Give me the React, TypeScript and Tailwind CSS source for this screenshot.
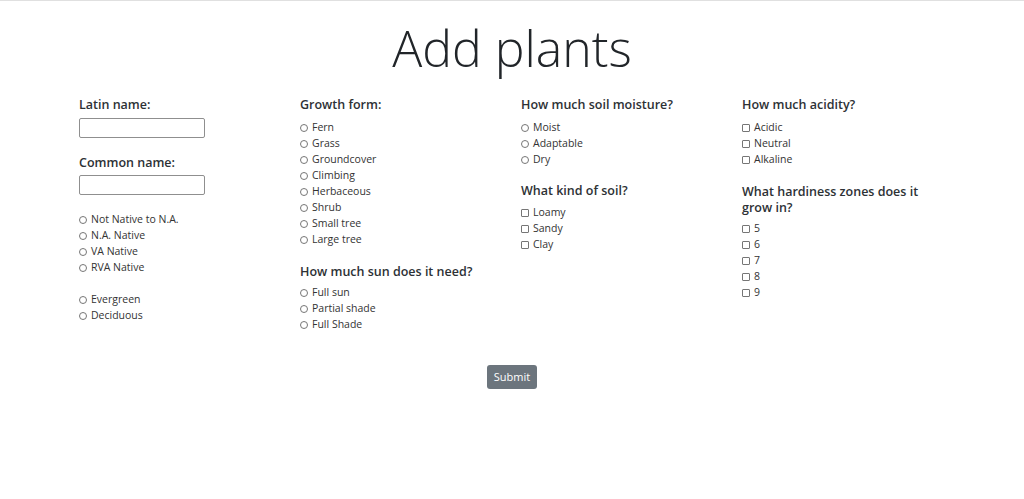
import React from "react";

const font = { fontFamily: '"Open Sans", "Noto Sans", sans-serif' };

function Radio({ label }: { label: string }) {
  return (
    <div className="flex items-center h-[16px] text-[10.5px] text-[#333]">
      <span className="inline-block w-[8px] h-[8px] rounded-full border border-[#767676] mr-[4px] shrink-0" />
      <span>{label}</span>
    </div>
  );
}

function Check({ label }: { label: string }) {
  return (
    <div className="flex items-center h-[16px] text-[10.5px] text-[#333]">
      <span className="inline-block w-[8px] h-[8px] rounded-[1px] border border-[#767676] mr-[4px] shrink-0" />
      <span>{label}</span>
    </div>
  );
}

function H({ children, mb }: { children: React.ReactNode; mb: string }) {
  return <div className={`text-[12.5px] leading-[16px] font-semibold text-[#2d3135] ${mb}`}>{children}</div>;
}

export default function App() {
  return (
    <div className="w-[1024px] h-[499px] bg-white border-t border-[#e0e0e0]" style={font}>
      <h1 className="text-center text-[50px] font-light leading-[62px] text-[#212529] pt-[16px] h-[96px]">Add plants</h1>
      <div className="mx-auto w-[884px] grid grid-cols-4 -translate-x-[2px]">
        <div className="px-[11px]">
          <H mb="mb-[5px]">Latin name:</H>
          <input className="block w-[126px] h-[20px] border border-[#8f8f8f] rounded-[2px]" />
          <div className="mt-[17px]">
            <H mb="mb-[4px]">Common name:</H>
          </div>
          <input className="block w-[126px] h-[20px] border border-[#8f8f8f] rounded-[2px]" />
          <div className="mt-[17px]">
            <Radio label="Not Native to N.A." />
            <Radio label="N.A. Native" />
            <Radio label="VA Native" />
            <Radio label="RVA Native" />
          </div>
          <div className="mt-[16px]">
            <Radio label="Evergreen" />
            <Radio label="Deciduous" />
          </div>
        </div>
        <div className="px-[11px]">
          <H mb="mb-[7px]">Growth form:</H>
          {["Fern", "Grass", "Groundcover", "Climbing", "Herbaceous", "Shrub", "Small tree", "Large tree"].map((l) => (
            <Radio key={l} label={l} />
          ))}
          <div className="mt-[16px]">
            <H mb="mb-[5px]">How much sun does it need?</H>
          </div>
          {["Full sun", "Partial shade", "Full Shade"].map((l) => (
            <Radio key={l} label={l} />
          ))}
        </div>
        <div className="px-[11px]">
          <H mb="mb-[7px]">How much soil moisture?</H>
          {["Moist", "Adaptable", "Dry"].map((l) => (
            <Radio key={l} label={l} />
          ))}
          <div className="mt-[15px]">
            <H mb="mb-[6px]">What kind of soil?</H>
          </div>
          {["Loamy", "Sandy", "Clay"].map((l) => (
            <Check key={l} label={l} />
          ))}
        </div>
        <div className="px-[11px]">
          <H mb="mb-[7px]">How much acidity?</H>
          {["Acidic", "Neutral", "Alkaline"].map((l) => (
            <Check key={l} label={l} />
          ))}
          <div className="mt-[16px] w-[190px]">
            <H mb="mb-[5px]">What hardiness zones does it grow in?</H>
          </div>
          {["5", "6", "7", "8", "9"].map((l) => (
            <Check key={l} label={l} />
          ))}
        </div>
      </div>
      <div className="flex justify-center mt-[32px]">
        <button className="w-[50px] h-[24px] bg-[#6c757d] text-white text-[11px] rounded-[3px]">Submit</button>
      </div>
    </div>
  );
}
